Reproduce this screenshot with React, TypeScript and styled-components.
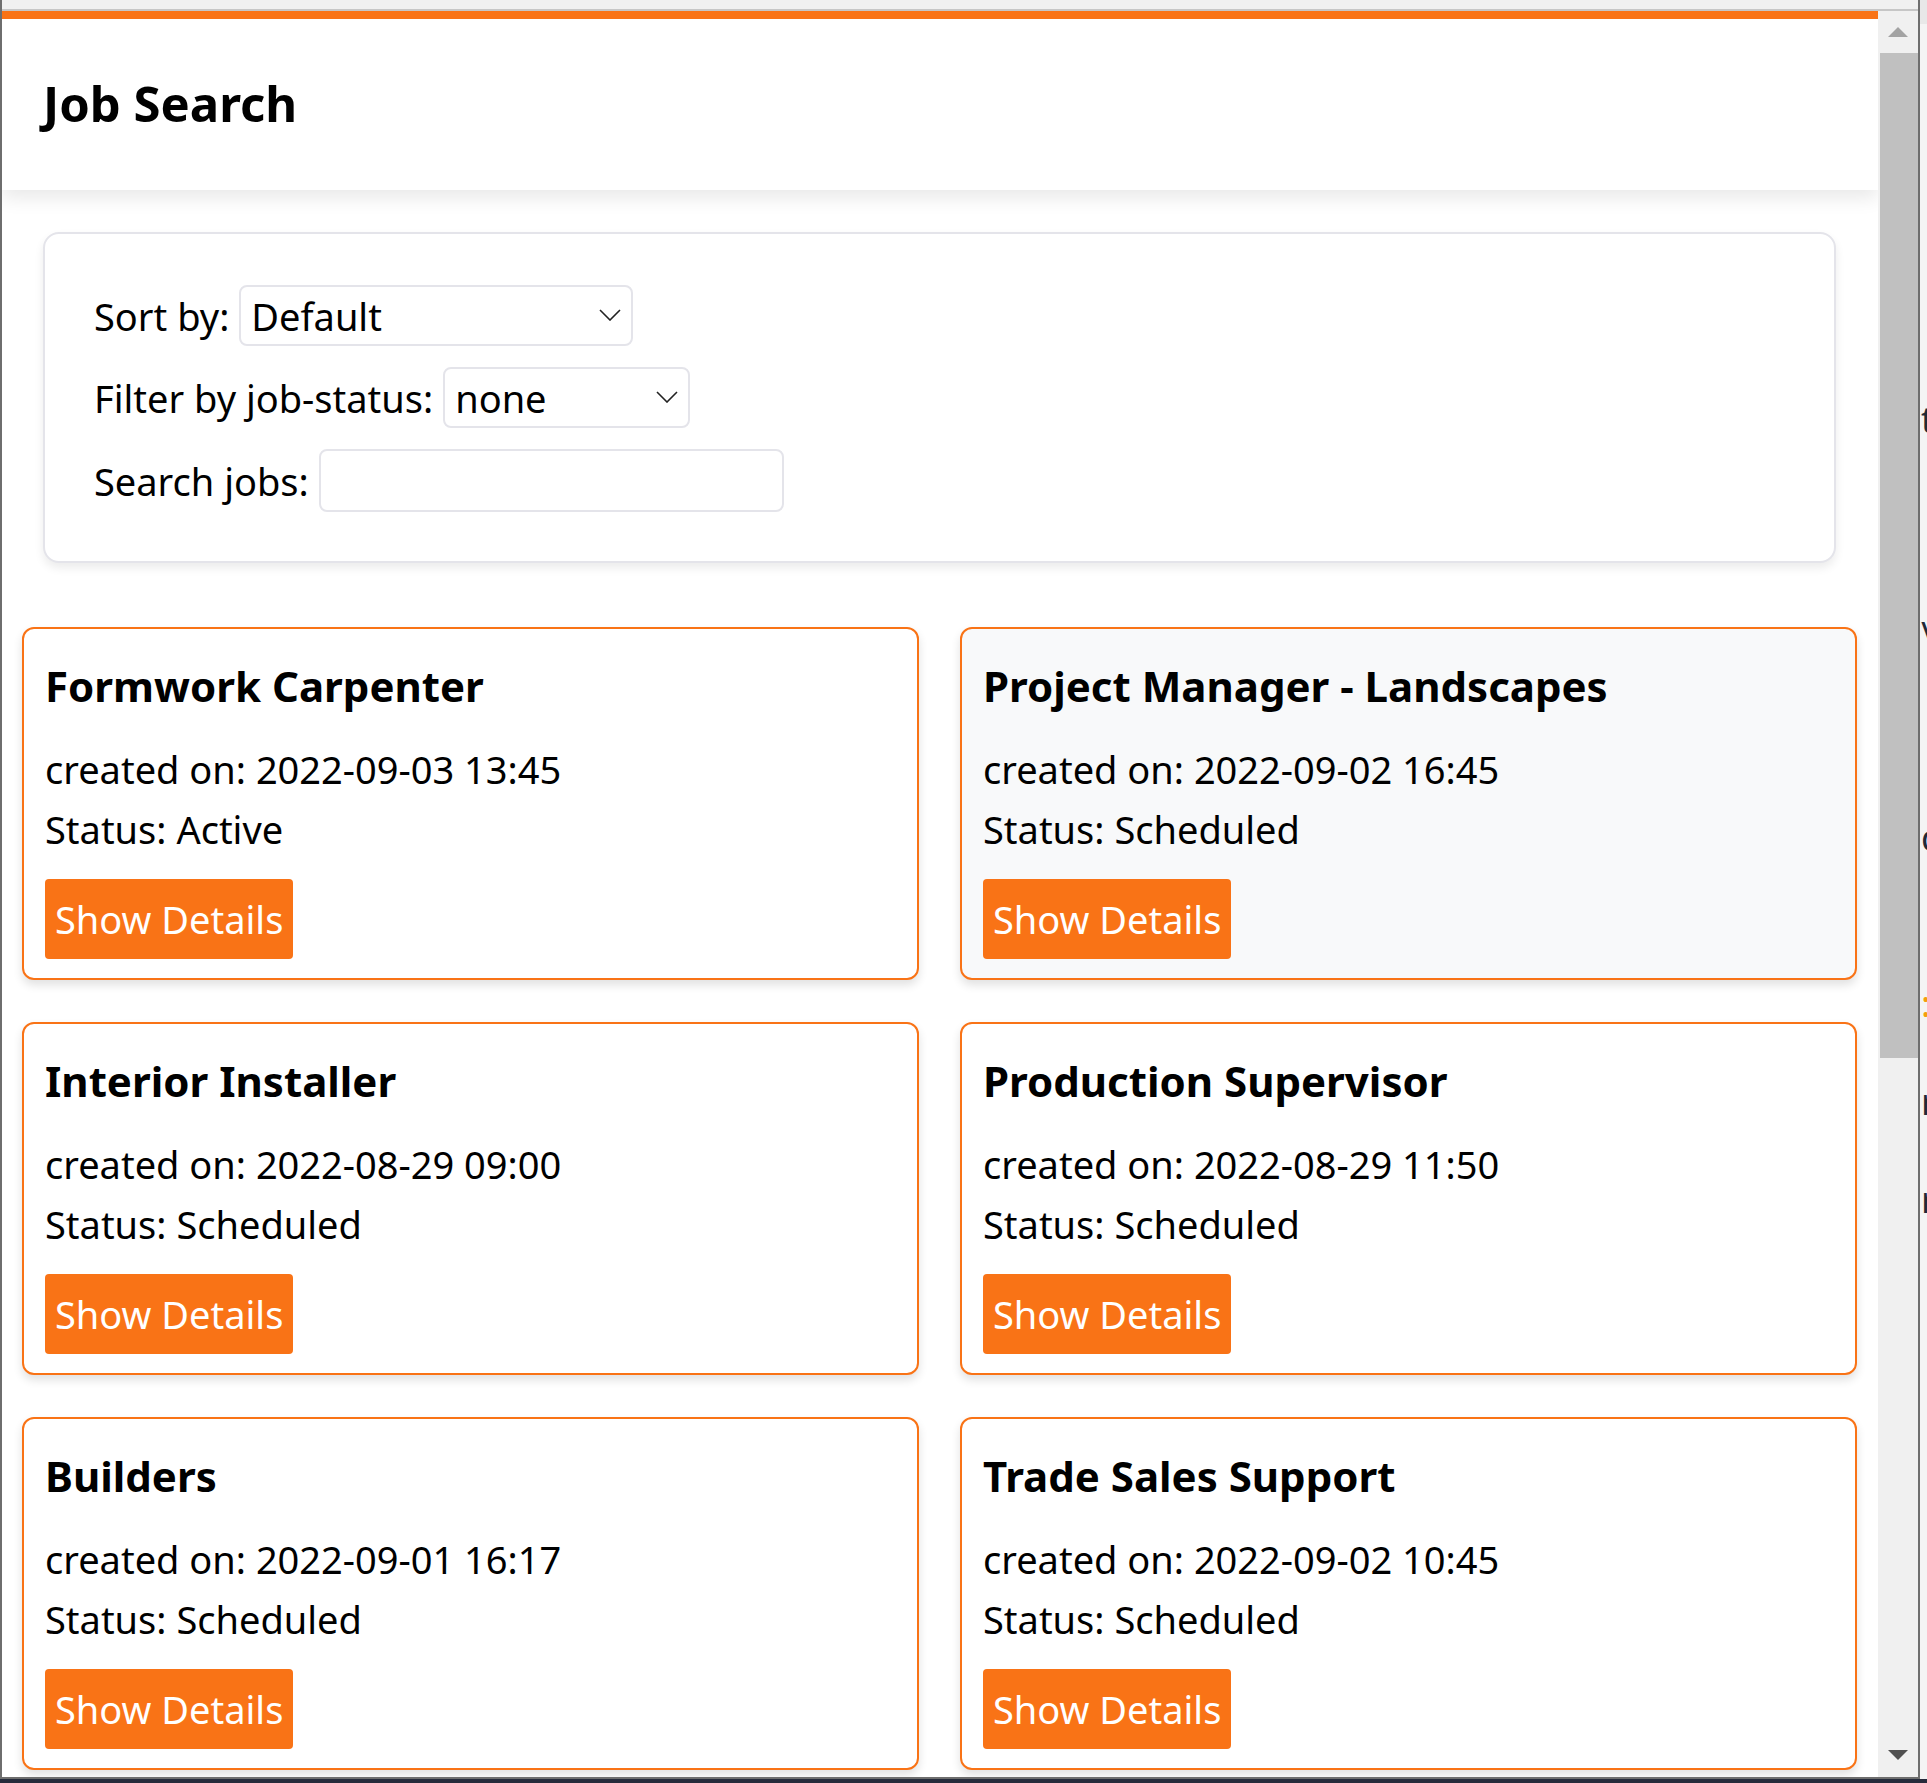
import styled, { createGlobalStyle } from 'styled-components';

const GlobalStyle = createGlobalStyle`
  html, body {
    margin: 0;
    padding: 0;
  }
  body {
    background: #262b3b;
    font-family: "Noto Sans", "Open Sans", sans-serif;
    color: #000;
  }
  * {
    box-sizing: border-box;
  }
`;

const Screen = styled.div`
  width: 1927px;
  height: 1783px;
  overflow: hidden;
  background: #262b3b;
`;

const Desktop = styled.div`
  display: flex;
  height: 1779px;
`;

const BrowserWindow = styled.div`
  width: 1920px;
  flex-shrink: 0;
  display: flex;
  flex-direction: column;
  border: 2px solid #6e6e6e;
  border-top: none;
  background: #f0f0f0;
`;

const TopStrip = styled.div`
  height: 11px;
  flex-shrink: 0;
  background: #f0f0f0;
  border-bottom: 2px solid #c6c6c6;
`;

const Viewport = styled.div`
  flex: 1;
  min-height: 0;
  display: flex;
`;

const Page = styled.main`
  flex: 1;
  min-width: 0;
  overflow: hidden;
  background: #fff;
  border-top: 8px solid #f97316;
`;

const Header = styled.header`
  position: relative;
  height: 171px;
  padding: 0 41px 4px;
  display: flex;
  align-items: center;
  background: #fff;
  box-shadow: 0 8px 18px rgba(0, 0, 0, 0.09);
`;

const Title = styled.h1`
  margin: 0;
  font-size: 49px;
  font-weight: 700;
  line-height: 60px;
`;

const FilterPanel = styled.section`
  margin: 42px 42px 0 41px;
  padding: 51px 49px 49px;
  display: flex;
  flex-direction: column;
  gap: 21px;
  border: 2px solid #e4e4ea;
  border-radius: 16px;
  background: #fff;
  box-shadow: 0 5px 10px rgba(0, 0, 0, 0.08);
`;

const FieldRow = styled.label`
  display: flex;
  align-items: center;
  gap: 10px;
  font-size: 38px;
  line-height: 50px;
`;

const SelectWrap = styled.div<{ $width: number }>`
  position: relative;
  width: ${p => p.$width}px;
  height: 61px;
  svg {
    position: absolute;
    right: 12px;
    top: 24px;
    pointer-events: none;
  }
`;

const Select = styled.select`
  appearance: none;
  width: 100%;
  height: 100%;
  padding: 0 40px 0 10px;
  border: 2px solid #e4e4ea;
  border-radius: 8px;
  background: #fff;
  color: #000;
  font-family: inherit;
  font-size: 38px;
`;

const SearchInput = styled.input`
  width: 465px;
  height: 63px;
  padding: 0 10px;
  border: 2px solid #e4e4ea;
  border-radius: 8px;
  font-family: inherit;
  font-size: 38px;
`;

const JobGrid = styled.div`
  padding: 64px 21px 0 20px;
  display: grid;
  grid-template-columns: 1fr 1fr;
  column-gap: 41px;
  row-gap: 42px;
`;

const JobCard = styled.article<{ $shaded?: boolean }>`
  height: 353px;
  padding: 31px 21px 20px;
  border: 2px solid #f97316;
  border-radius: 12px;
  background: ${p => (p.$shaded ? '#f8f9fa' : '#fff')};
  box-shadow: 0 5px 10px rgba(0, 0, 0, 0.12);
`;

const JobTitle = styled.h2`
  margin: 0 0 33px;
  font-size: 42px;
  font-weight: 700;
  line-height: 51px;
`;

const JobInfo = styled.p`
  margin: 0 0 10px;
  font-size: 38px;
  line-height: 50px;
  &:last-of-type {
    margin-bottom: 25px;
  }
`;

const DetailsButton = styled.button`
  height: 80px;
  padding: 0 10px;
  border: none;
  border-radius: 4px;
  background: #f97316;
  color: #fff;
  font-family: inherit;
  font-size: 38px;
  line-height: 50px;
  cursor: pointer;
`;

const Scrollbar = styled.div`
  width: 40px;
  flex-shrink: 0;
  display: flex;
  flex-direction: column;
  background: #f0f0f0;
`;

const ScrollArrow = styled.div<{ $height: number }>`
  height: ${p => p.$height}px;
  flex-shrink: 0;
  display: flex;
  align-items: center;
  justify-content: center;
`;

const ScrollThumb = styled.div`
  height: 1005px;
  margin-left: 2px;
  background: #c0c0c0;
`;

const ScrollTrack = styled.div`
  flex: 1;
`;

const OutsideStrip = styled.div`
  flex: 1;
  overflow: hidden;
  background: #f4f4f4;
  border-top: 24px solid #e8e8e8;
  padding-left: 1px;
  font-family: "Noto Sans", sans-serif;
  font-size: 36px;
  line-height: 40px;
  color: #1f2937;
`;

const Fragment = styled.div<{ $gap: number; $accent?: boolean }>`
  margin-top: ${p => p.$gap}px;
  color: ${p => (p.$accent ? '#f59e0b' : '#1f2937')};
  white-space: nowrap;
`;

const Chevron = () => (
  <svg width="22" height="12" viewBox="0 0 22 12">
    <polyline points="1,1 11,11 21,1" fill="none" stroke="#222" strokeWidth="1.6" />
  </svg>
);

const Triangle = ({ up, color }: { up?: boolean; color: string }) => (
  <svg width="20" height="10" viewBox="0 0 20 10">
    <polygon points={up ? '10,0 20,10 0,10' : '0,0 20,0 10,10'} fill={color} />
  </svg>
);

interface IJob {
  id: number;
  title: string;
  created: string;
  status: string;
}

const jobs: IJob[] = [
  { id: 1, title: 'Formwork Carpenter', created: '2022-09-03 13:45', status: 'Active' },
  { id: 2, title: 'Project Manager - Landscapes', created: '2022-09-02 16:45', status: 'Scheduled' },
  { id: 3, title: 'Interior Installer', created: '2022-08-29 09:00', status: 'Scheduled' },
  { id: 4, title: 'Production Supervisor', created: '2022-08-29 11:50', status: 'Scheduled' },
  { id: 5, title: 'Builders', created: '2022-09-01 16:17', status: 'Scheduled' },
  { id: 6, title: 'Trade Sales Support', created: '2022-09-02 10:45', status: 'Scheduled' },
];

function App() {
  return (
    <Screen>
      <GlobalStyle />
      <Desktop>
        <BrowserWindow>
          <TopStrip />
          <Viewport>
            <Page>
              <Header>
                <Title>Job Search</Title>
              </Header>
              <FilterPanel>
                <FieldRow>
                  Sort by:
                  <SelectWrap $width={394}>
                    <Select defaultValue="default">
                      <option value="default">Default</option>
                      <option value="date">Date</option>
                      <option value="title">Title</option>
                    </Select>
                    <Chevron />
                  </SelectWrap>
                </FieldRow>
                <FieldRow>
                  Filter by job-status:
                  <SelectWrap $width={247}>
                    <Select defaultValue="none">
                      <option value="none">none</option>
                      <option value="active">Active</option>
                      <option value="scheduled">Scheduled</option>
                    </Select>
                    <Chevron />
                  </SelectWrap>
                </FieldRow>
                <FieldRow>
                  Search jobs:
                  <SearchInput type="text" />
                </FieldRow>
              </FilterPanel>
              <JobGrid>
                {jobs.map(job => (
                  <JobCard key={job.id} $shaded={job.id === 2}>
                    <JobTitle>{job.title}</JobTitle>
                    <JobInfo>created on: {job.created}</JobInfo>
                    <JobInfo>Status: {job.status}</JobInfo>
                    <DetailsButton>Show Details</DetailsButton>
                  </JobCard>
                ))}
              </JobGrid>
            </Page>
            <Scrollbar>
              <ScrollArrow $height={42}>
                <Triangle up color="#a3a3a3" />
              </ScrollArrow>
              <ScrollThumb />
              <ScrollTrack />
              <ScrollArrow $height={44}>
                <Triangle color="#505050" />
              </ScrollArrow>
            </Scrollbar>
          </Viewport>
        </BrowserWindow>
        <OutsideStrip>
          <Fragment $gap={376}>t</Fragment>
          <Fragment $gap={175}>\</Fragment>
          <Fragment $gap={163}>d</Fragment>
          <Fragment $gap={126} $accent>:</Fragment>
          <Fragment $gap={58}>r</Fragment>
          <Fragment $gap={58}>r</Fragment>
        </OutsideStrip>
      </Desktop>
    </Screen>
  );
}

export default App;
